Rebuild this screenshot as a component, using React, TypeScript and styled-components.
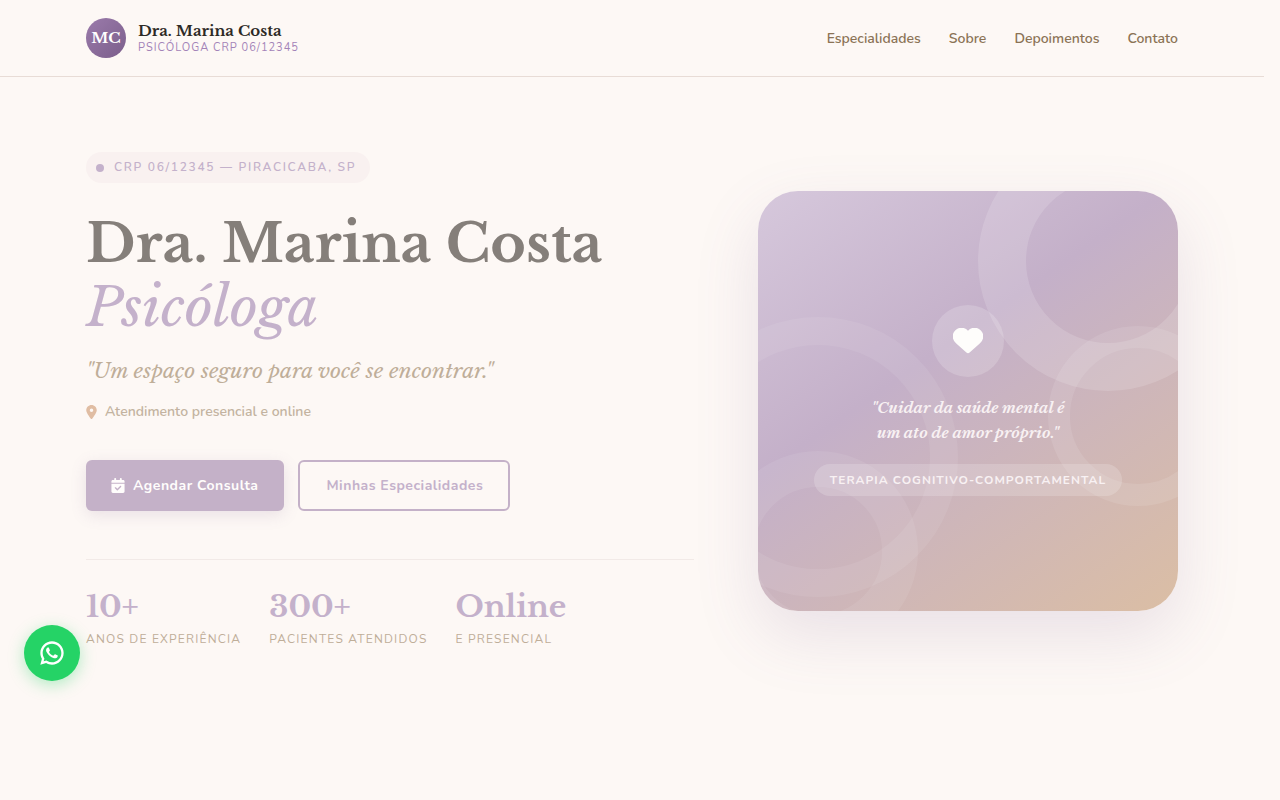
import React from "react";
import styled, { createGlobalStyle } from "styled-components";
import { FaCalendarCheck, FaLocationDot } from "react-icons/fa6";
import { RiWhatsappLine } from "react-icons/ri";

const serif = `"Libre Baskerville", "Liberation Serif", serif`;
const sans = `Nunito, "Open Sans", sans-serif`;

const GlobalStyle = createGlobalStyle`
  *, *::before, *::after { box-sizing: border-box; }
  body {
    margin: 0;
    padding-right: 16px;
    background: #fdf8f5;
    color: #2d2a26;
    font-family: ${sans};
  }
  h1, p, dl, dd { margin: 0; }
  a { color: inherit; text-decoration: none; }
  button { font: inherit; cursor: pointer; }
`;

const Header = styled.header`
  border-bottom: 1px solid #e8dcd6;
`;

const Container = styled.div`
  max-width: 1140px;
  margin: 0 auto;
  padding: 0 24px;
`;

const HeaderRow = styled(Container)`
  display: flex;
  align-items: center;
  justify-content: space-between;
  padding-top: 18px;
  padding-bottom: 18px;
`;

const Brand = styled.a`
  display: flex;
  align-items: center;
  gap: 12px;
`;

const Monogram = styled.span`
  display: flex;
  align-items: center;
  justify-content: center;
  width: 40px;
  height: 40px;
  border-radius: 50%;
  background: linear-gradient(135deg, #9b7bab, #7b5e8b);
  color: #fff;
  font: 700 15px/20px ${serif};
`;

const BrandText = styled.span`
  display: flex;
  flex-direction: column;
`;

const BrandName = styled.span`
  font: 700 15px/20px ${serif};
`;

const BrandRole = styled.span`
  color: #a383b8;
  font-size: 11px;
  line-height: 14px;
  letter-spacing: 1px;
  text-transform: uppercase;
`;

const Nav = styled.nav`
  display: flex;
  gap: 28px;
  padding-top: 2px;
  color: #8b7355;
  font-size: 14px;
  font-weight: 600;
  line-height: 22px;
`;

const Hero = styled(Container)`
  display: grid;
  grid-template-columns: 1fr 420px;
  gap: 64px;
  align-items: center;
  padding-top: 75px;
  padding-bottom: 75px;
`;

const Badge = styled.p`
  display: inline-flex;
  align-items: center;
  gap: 10px;
  padding: 8px 14px 8px 10px;
  border-radius: 20px;
  background: #f9f1f0;
  color: #c4b1cb;
  font-size: 12px;
  font-weight: 600;
  line-height: 15px;
  letter-spacing: 0.14em;
  text-transform: uppercase;

  &::before {
    content: "";
    width: 8px;
    height: 8px;
    border-radius: 50%;
    background: #c4b1cb;
  }
`;

const Title = styled.h1`
  margin-top: 29px;
  color: #857f7a;
  font: 700 54px/64px ${serif};
`;

const TitleRole = styled.em`
  display: block;
  color: #c4b1cb;
  font-weight: 400;
`;

const Motto = styled.p`
  margin-top: 15px;
  color: #bfae99;
  font: italic 400 21px/32px ${serif};
`;

const Place = styled.p`
  display: flex;
  align-items: center;
  gap: 8px;
  margin-top: 14px;
  color: #c3b3a0;
  font-size: 14px;
  font-weight: 600;
  line-height: 22px;

  svg {
    width: 11px;
    height: 14px;
    color: #e0bda3;
  }
`;

const Actions = styled.div`
  display: flex;
  gap: 14px;
  margin-top: 37px;
`;

const Button = styled.button<{ $primary?: boolean }>`
  display: flex;
  align-items: center;
  gap: 8px;
  height: 51px;
  padding: ${(p) => (p.$primary ? "0 26px 0 25px" : "0 25px 0 26px")};
  border: ${(p) => (p.$primary ? "none" : "2px solid #c4b1c8")};
  border-radius: 6px;
  background: ${(p) => (p.$primary ? "#c4b1c8" : "transparent")};
  color: ${(p) => (p.$primary ? "#fffdfc" : "#c4b1cb")};
  font-size: 14px;
  font-weight: 700;
  line-height: 20px;
  letter-spacing: 0.5px;
  box-shadow: ${(p) =>
    p.$primary ? "0 4px 16px rgba(123, 94, 139, 0.15)" : "none"};

  svg {
    width: 14px;
    height: 15px;
  }
`;

const Stats = styled.dl`
  display: flex;
  gap: 28px;
  margin-top: 48px;
  padding: 27px 0 2px;
  border-top: 1px solid #f2eae7;
`;

const Stat = styled.div`
  display: flex;
  flex-direction: column-reverse;
`;

const StatValue = styled.dd`
  color: #c4b1cb;
  font: 700 30px/40px ${serif};
`;

const StatLabel = styled.dt`
  margin-top: 3px;
  color: #bfae99;
  font-size: 12px;
  font-weight: 400;
  line-height: 18px;
  letter-spacing: 0.1em;
  text-transform: uppercase;
`;

const Card = styled.aside`
  position: relative;
  display: flex;
  flex-direction: column;
  align-items: center;
  justify-content: center;
  height: 420px;
  padding-bottom: 2px;
  overflow: hidden;
  border-radius: 40px;
  background: linear-gradient(145deg, #d6c8dc 0%, #c4b0c9 40%, #dbbea4 100%);
  color: #f8f1f3;
  text-align: center;
`;

const CardShadow = styled.div`
  border-radius: 40px;
  box-shadow: 0 24px 64px rgba(123, 94, 149, 0.15);
`;

const Ring = styled.span<{ $size: number; $band: number; $alpha: number }>`
  position: absolute;
  width: ${(p) => p.$size}px;
  height: ${(p) => p.$size}px;
  border: ${(p) => p.$band}px solid rgba(255, 255, 255, ${(p) => p.$alpha});
  border-radius: 50%;
`;

const RingTopRight = styled(Ring)`
  top: -60px;
  right: -60px;
`;

const RingLeft = styled(Ring)`
  top: 30%;
  left: -80px;
`;

const RingBottomLeft = styled(Ring)`
  bottom: -40px;
  left: -40px;
`;

const RingRight = styled(Ring)`
  right: -50px;
  bottom: 25%;
`;

const HeartDisc = styled.span`
  position: relative;
  display: flex;
  align-items: center;
  justify-content: center;
  width: 72px;
  height: 72px;
  border-radius: 50%;
  background: rgba(255, 255, 255, 0.18);
  color: #fefdfb;
`;

const CardQuote = styled.p`
  position: relative;
  margin-top: 18px;
  font: italic 700 15px/25px ${serif};
`;

const CardTag = styled.p`
  position: relative;
  margin-top: 19px;
  padding: 8px 16px;
  border-radius: 20px;
  background: rgba(255, 255, 255, 0.18);
  font-size: 12px;
  font-weight: 700;
  line-height: 16px;
  letter-spacing: 1px;
  text-transform: uppercase;
`;

const ChatLink = styled.a`
  position: fixed;
  bottom: 119px;
  left: 24px;
  display: flex;
  align-items: center;
  justify-content: center;
  width: 56px;
  height: 56px;
  border-radius: 50%;
  background: #25d366;
  color: #fff;
  box-shadow: 0 4px 16px rgba(37, 211, 102, 0.35);
`;

const Heart = () => (
  <svg width="30" height="26" viewBox="0 0 30 26" fill="currentColor" aria-hidden="true">
    <path d="M15 2.7A8.7 8.7 0 1 0 3 15.2L13.4 24.6Q15 26 16.6 24.6L27 15.2A8.7 8.7 0 1 0 15 2.7Z" />
  </svg>
);

const links = [
  ["Especialidades", "#especialidades"],
  ["Sobre", "#sobre"],
  ["Depoimentos", "#depoimentos"],
  ["Contato", "#contato"],
];

const stats = [
  ["10+", "Anos de experiência"],
  ["300+", "Pacientes atendidos"],
  ["Online", "E presencial"],
];

export default function App() {
  return (
    <>
      <GlobalStyle />
      <Header>
        <HeaderRow>
          <Brand href="#inicio">
            <Monogram>MC</Monogram>
            <BrandText>
              <BrandName>Dra. Marina Costa</BrandName>
              <BrandRole>Psicóloga CRP 06/12345</BrandRole>
            </BrandText>
          </Brand>
          <Nav>
            {links.map(([label, href]) => (
              <a key={href} href={href}>
                {label}
              </a>
            ))}
          </Nav>
        </HeaderRow>
      </Header>

      <Hero as="main" id="inicio">
        <div>
          <Badge>CRP 06/12345 — Piracicaba, SP</Badge>
          <Title>
            Dra. Marina Costa
            <TitleRole>Psicóloga</TitleRole>
          </Title>
          <Motto>"Um espaço seguro para você se encontrar."</Motto>
          <Place>
            <FaLocationDot />
            Atendimento presencial e online
          </Place>
          <Actions>
            <Button $primary type="button">
              <FaCalendarCheck />
              Agendar Consulta
            </Button>
            <Button type="button">Minhas Especialidades</Button>
          </Actions>
          <Stats>
            {stats.map(([value, label]) => (
              <Stat key={label}>
                <StatLabel>{label}</StatLabel>
                <StatValue>{value}</StatValue>
              </Stat>
            ))}
          </Stats>
        </div>

        <CardShadow>
          <Card>
            <RingTopRight $size={260} $band={48} $alpha={0.15} />
            <RingLeft $size={280} $band={28} $alpha={0.08} />
            <RingBottomLeft $size={200} $band={36} $alpha={0.08} />
            <RingRight $size={180} $band={22} $alpha={0.1} />
            <HeartDisc>
              <Heart />
            </HeartDisc>
            <CardQuote>
              "Cuidar da saúde mental é
              <br />
              um ato de amor próprio."
            </CardQuote>
            <CardTag>Terapia Cognitivo-Comportamental</CardTag>
          </Card>
        </CardShadow>
      </Hero>

      <ChatLink href="#whatsapp" aria-label="WhatsApp">
        <RiWhatsappLine size={28} />
      </ChatLink>
    </>
  );
}
